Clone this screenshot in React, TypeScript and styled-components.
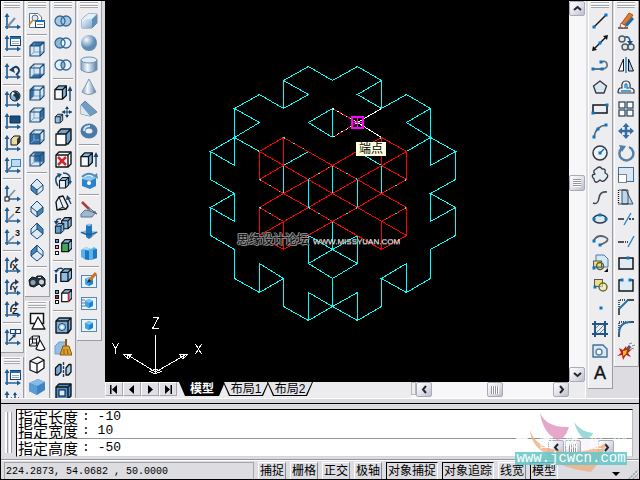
import React from "react";
import styled, { createGlobalStyle, css } from "styled-components";

const cjk = `"Liberation Sans", "Noto Sans CJK SC", sans-serif`;
const mono = `"Liberation Mono", "Noto Sans CJK SC", monospace`;

const GlobalStyle = createGlobalStyle`
  * { box-sizing: border-box; }
  html, body { margin: 0; height: 100%; }
  body { overflow: hidden; background: #dcdce1; color: #000; font: 12px/14px ${cjk}; }
  button { font: inherit; color: inherit; padding: 0; margin: 0; border: 0; background: none; }
`;

/* ---------- icons ---------- */

const N = "#16436f";
const B = "#3b76ad";
const L = "#c5dcf0";
const K = "#101418";

type Pt = string;
const Ln = ({ d, c = N, w = 1.4, dash }: { d: Pt; c?: string; w?: number; dash?: string }) => (
  <path d={d} fill="none" stroke={c} strokeWidth={w} strokeDasharray={dash} />
);
const Fl = ({ d, f, c = "none", w = 1 }: { d: Pt; f: string; c?: string; w?: number }) => (
  <path d={d} fill={f} stroke={c} strokeWidth={w} strokeLinejoin="round" />
);
const Dots = ({ at }: { at: number[][] }) => (
  <>{at.map(([x, y]) => <rect key={`${x}-${y}`} x={x - 1.5} y={y - 1.5} width="3" height="3" fill="#0876c4" />)}</>
);

const axes = (
  <>
    <Ln d="M4 17V3M2 15H16" c="#2a6496" w={1.7} />
    <Fl d="M4 1L6.5 5H1.5ZM18 15L14 12.500V17.500Z" f="#1d5a90" />
  </>
);
const dialog = (
  <>
    <rect x="7.500" y="2.500" width="10" height="9" fill="#fff" stroke={N} />
    <path d="M7 3H18V5H7Z" fill="#1f6cae" />
    <Ln d="M9 7.500H16M9 9.500H16" c="#9ab" w={1} />
  </>
);

const faces: Record<string, string> = {
  top: "M2 6L6 2H16L12 6Z",
  bottom: "M2 16L6 12H16L12 16Z",
  left: "M2 6L6 2V12L2 16Z",
  right: "M12 6L16 2V12L12 16Z",
  front: "M2 6H12V16H2Z",
  back: "M6 2H16V12H6Z",
};
const cubeView = (face: string) => (
  <>
    <Fl d="M2 6L6 2H16V12L12 16H2Z" f="#d6e6f4" />
    <Fl d={faces[face]} f="#326da6" />
    <Ln d="M6 2V12H16M6 12L2 16" c="#7fa6c9" w={1} />
    <Ln d="M2 6L6 2H16V12L12 16H2ZM2 6H12V16M12 6L16 2" c="#1d4a75" w={1.1} />
  </>
);
const isoView = (dark: string, from: "low" | "high") => (
  <>
    <Fl d="M9 1L15 7V12L9 17L3 12V7Z" f="#dce9f6" />
    <Fl d={dark} f="#4583bb" />
    <Ln
      d={from === "low" ? "M9 1L15 7V12L9 17L3 12V7ZM3 7L9 12L15 7M9 12V17" : "M9 1L15 7V12L9 17L3 12V7ZM9 1V7L3 12M9 7L15 12"}
      c="#1d4a75"
      w={1}
    />
  </>
);
const solid = (x = 0, y = 0, front = L, s = 1) => (
  <g transform={`translate(${x} ${y}) scale(${s})`}>
    <Fl d="M2 6L6 2H14V12L10 16H2Z" f="#86b6dd" />
    <Fl d="M2 6H10V16H2Z" f={front} />
    <Ln d="M2 6L6 2H14V12L10 16H2ZM2 6H10V16M10 6L14 2" c={K} w={1.4} />
  </g>
);
const rings = (a: string, mid: string, b: string) => (
  <>
    <circle cx="6" cy="9" r="5" fill={a} />
    <circle cx="12" cy="9" r="5" fill={b} />
    <Fl d="M9 5A5 5 0 0 1 9 13A5 5 0 0 1 9 5Z" f={mid} />
    <circle cx="6" cy="9" r="5" fill="none" stroke="#356b9b" strokeWidth="1.300" />
    <circle cx="12" cy="9" r="5" fill="none" stroke="#356b9b" strokeWidth="1.300" />
  </>
);
const curl = (
  <>
    <Ln d="M8 12Q7 5 13 4" c="#223c58" w={1.6} />
    <Fl d="M12 1L16 4L12 7Z" f="#223c58" />
  </>
);
const letter = (t: string, x: number, y: number, size = 9) => (
  <text x={x} y={y} fontFamily="Liberation Sans, sans-serif" fontWeight="700" fontSize={size} fill={K}>{t}</text>
);
const panelCube = (
  <>
    <rect x="1.500" y="3.500" width="15" height="12" fill="#eaf3fa" stroke="#5688b4" />
    <Fl d="M5 7L9 5L13 7V12L9 14L5 12Z" f="#1685d2" />
    <Fl d="M5 7L9 5L13 7L9 9Z" f="#83c6f2" />
    <Fl d="M5 7L9 9V14L5 12Z" f="#45a5e4" />
  </>
);

const icons: Record<string, React.ReactNode> = {
  ucs: <>{axes}<Ln d="M5 14L12 6" c="#7c91aa" w={2} /></>,
  ucsDialog: <>{axes}{dialog}</>,
  ucsPrev: <>{axes}<Ln d="M9 8Q12 3 15 6T13 13" c="#193f6a" w={2} /><Fl d="M6 8L10 5L12 11Z" f="#193f6a" /></>,
  ucsWorld: <>{axes}<circle cx="12" cy="6" r="5" fill="#8ab4d4" stroke={K} /><Fl d="M12 1Q8 4 11 6T12 11Q18 9 16 4Z" f="#14384f" /><Fl d="M9 2L12 3L9 6Z" f="#fff" /></>,
  ucsObject: <>{axes}<Fl d="M7 4H17V11H7Z" f="#1c4e7c" c="#0d3153" /></>,
  ucsFace: <>{axes}<Fl d="M8 5L11 2H17V8L14 11H8Z" f="#e7dca2" c={K} /><Fl d="M14 5L17 2V8L14 11Z" f="#39362b" /></>,
  ucsView: <>{axes}<rect x="8.500" y="3.500" width="9" height="7" fill="#b9dcf3" stroke="#3984bb" /><Ln d="M5 14L8 11" c={B} /></>,
  ucsOrigin: <>{axes}<Ln d="M5 14L12 6" c="#7c91aa" w={1.7} /><rect x="2" y="13" width="4" height="4" fill="#fff" stroke={K} /></>,
  ucsZ: <>{axes}<Ln d="M5 14L11 8" c="#7c91aa" w={1.7} />{letter("Z", 12, 7, 9)}</>,
  ucs3: <>{axes}<Ln d="M5 14L11 8" c="#7c91aa" w={1.7} />{letter("3", 12, 8)}</>,
  rotX: <>{axes}{curl}{letter("X", 9, 14, 9)}</>,
  rotY: <>{axes}{curl}{letter("Y", 9, 14, 9)}</>,
  rotZ: <>{axes}{curl}{letter("Z", 9, 14, 9)}</>,
  ucsApply: <>{axes}<rect x="7.500" y="1.500" width="10" height="4" fill="#fff" stroke={N} /><Ln d="M12.500 2V5M6 13L12 7" /><Fl d="M13 6L9 7L12 10Z" f={N} /></>,
  ucsMove: <>{axes}<Ln d="M12 4V14M7 9H17" c={N} /><Fl d="M12 2L14 5H10ZM18 9L15 7V11ZM6 9L9 7V11Z" f={N} /></>,

  namedView: <><path d="M1.500 1.500H10L13.500 5V15.500H1.500Z" fill="#fff" stroke="#50789c" /><circle cx="7" cy="6" r="3" fill="#d7e8f5" stroke="#6a6a68" /><Ln d="M5 8L1 13" c="#d38b28" w={2} /><rect x="7.500" y="8.500" width="9" height="7" fill="#fff" stroke={N} /><path d="M7 8H17V10H7Z" fill="#1f6cae" /><Ln d="M9 12.500H15" c="#88a" w={1} /></>,
  sw: isoView("M3 7L9 12V17L3 12Z", "low"),
  se: isoView("M15 7L9 12V17L15 12Z", "low"),
  ne: isoView("M9 1L15 7V12L9 7Z", "high"),
  nw: isoView("M9 1L3 7V12L9 7Z", "high"),
  camera: <><Fl d="M1 8L4 5L8 6L9 4L14 4L17 7V13L14 15L11 12L6 15L2 14Z" f="#28323c" c="#0c1218" /><circle cx="5" cy="10.500" r="2.500" fill="#8ca2b2" /><circle cx="13.500" cy="10" r="2.500" fill="#c6d3dc" /><Ln d="M10 5.500H13" c="#dde" w={1} /></>,
  wire2d: <><rect x="2.500" y="1.500" width="13" height="10" fill="#fff" stroke={K} strokeWidth="1.500" /><Fl d="M10 5L17 17H4Z" f="#fff" c={K} w={1.3} /></>,
  wire3d: <><Ln d="M1.500 5V12H8M1.500 5L4.500 2H11.500V8M1.500 5H8.500V12M8.500 5L11.500 2M4.500 2V9H10M4.500 9L1.500 12" c={K} w={1} /><Fl d="M12 6L17 15Q13 18 8 15Z" f="#fff" c={K} w={1.2} /></>,
  hidden: <Fl d="M2 5L10 1L16 4V12L9 17L2 14ZM2 5L9 8L16 4M9 8V17" f="#fff" c={K} w={1.3} />,
  shaded: <><Fl d="M1 5L10 1L17 4V12L9 17L1 13Z" f="#3f83c2" /><Fl d="M1 5L10 1L17 4L9 8Z" f="#89bae6" /><Fl d="M1 5L9 8V17L1 13Z" f="#5b9bd6" /></>,

  union: rings("#a9c8e0", "#a9c8e0", "#a9c8e0"),
  subtract: rings("#8eb6d6", "#f4f7fa", "#e8eef4"),
  intersect: rings("#eef2f6", "#8eb6d6", "#eef2f6"),
  extrudeFace: <><g>{solid(-1, 0, "#f4f7fa", 0.95)}</g><Ln d="M16 17V5" /><Fl d="M16 2L18.500 7H13.500Z" f={N} /></>,
  moveFace: <>{solid(0, 7, "#8ec0e6", 0.62)}<Ln d="M13 1V11M8 6H18" c={N} w={1} /><Fl d="M13 0L15 3H11ZM13 12L15 9H11ZM18 6L15 4V8ZM8 6L11 4V8Z" f={N} /></>,
  offsetFace: <><Fl d="M4 4L7 1H17V12L14 16H4Z" f="#6fa5d2" c={K} w={1.4} /><Fl d="M2 6H12V17H2Z" f="#fff" c={K} w={1.3} /><Ln d="M12 6L16 2" c={K} /></>,
  deleteFace: <><Fl d="M2 5L5 2H17V14L14 17H2Z" f="#fff" c={K} w={1.4} /><Ln d="M2 5H14V17M14 5L17 2" c={K} /><Ln d="M4 7L12 15M12 7L4 15" c="#d8232c" w={2.5} /></>,
  rotateFace: <>{solid(4, 4, "#eaf3fa", 0.75)}<Ln d="M4 14Q-1 6 5 3M9 1Q17 1 16 9" c="#1d5079" w={1.6} /><Fl d="M3 1L8 2L5 6ZM14 9H18L16 13Z" f="#1d5079" /></>,
  taperFace: <><Fl d="M2 8L5 3L9 2L14 12L12 15L3 16Z" f="#eaf3fa" c={K} w={1.4} /><Ln d="M5 3L9 13L12 15M9 13L3 16" c={K} w={1} /><Ln d="M17 10L14 4" /><Fl d="M13 1L17 5L12 6Z" f={N} /></>,
  copyFace: <>{solid(6, 0, "#8ebde3", 0.8)}{solid(0, 6, "#5c9dd1", 0.7)}<Ln d="M2 7Q2 2 7 3" /><Fl d="M0 5H5L2 9Z" f={N} /></>,
  colorFace: <>{solid(6, 0, "#43a854", 0.85)}<rect x="1.500" y="1.500" width="3" height="3" fill="#4aa1cf" stroke={K} /><rect x="1.500" y="7.500" width="3" height="3" fill="#e9a3a6" stroke={K} /><rect x="1.500" y="13.500" width="3" height="3" fill="#fff" stroke={K} /></>,
  copyEdge: <>{solid(5, 1, "#8ebde3", 0.9)}<Ln d="M2 17V8" w={2} /><Ln d="M2 5Q5 1 9 3" /><Fl d="M0 4L5 4L2 7Z" f={N} /></>,
  colorEdge: <>{solid(6, 0, "#fff", 0.85)}<Ln d="M14.500 5V14" c="#d8232c" /><rect x="1.500" y="2.500" width="3" height="3" fill="#4ab4cf" stroke={K} /><rect x="1.500" y="7.500" width="3" height="3" fill="#c1272d" stroke={K} /><rect x="1.500" y="12.500" width="3" height="3" fill="#fff" stroke={K} /></>,
  imprint: <><Fl d="M2 5L5 2H17V13L14 17H2Z" f="#7db0da" c={K} w={1.4} /><Ln d="M2 5H14V17M14 5L17 2" c={K} /><circle cx="8" cy="11" r="3.500" fill="#bad8ef" stroke={N} /><circle cx="8" cy="11" r="1.500" fill="#fff" /></>,
  clean: <><Fl d="M1 8L5 4H12V13L9 16H1Z" f="#8fc0e6" c="#7a9cba" /><Ln d="M12 1V8" c="#8b5a14" w={2} /><Fl d="M9 8H15L18 17H6Z" f="#e0a12d" c="#87580f" /><Ln d="M10 11V16M13 11L14 16" c="#87580f" w={1} /></>,
  separate: <><Fl d="M1.500 8L5 4.500H7V12L4 15H1.500Z" f="#78addb" c={K} w={1.3} /><Fl d="M12 8L15 4.500H17V12L14.500 15H12Z" f="#a8cbe8" c={K} w={1.3} /><Ln d="M9.500 2V17" c={N} dash="3 1" /></>,
  shell: <><Fl d="M2 5L5 2H17V14L14 17H2Z" f="#4b8fcc" c={K} w={1.4} /><Ln d="M2 5H14V17M14 5L17 2" c={K} /><rect x="5" y="8" width="6" height="6" fill="#d8eaf7" stroke={K} /></>,

  box: <><Fl d="M2 7L8 2H17V11L12 16H2Z" f="#5f8fb8" c="#6c8cab" /><Fl d="M2 7L8 2H17L12 7Z" f="#e3f0fb" /><Fl d="M2 7H12V16H2Z" f="url(#metal)" /></>,
  sphere: <circle cx="9" cy="9" r="8" fill="url(#ball)" />,
  cylinder: <><Fl d="M1 4V14Q9 19 17 14V4Z" f="url(#tube)" c="#7792ac" /><ellipse cx="9" cy="4" rx="8" ry="3" fill="#dcecf8" stroke="#7792ac" /></>,
  cone: <Fl d="M9 1L16 14Q9 19 2 14Z" f="url(#tube)" c="#8497ab" />,
  wedge: <><Fl d="M1 5L5 1L17 12L10 16L1 14Z" f="#6f9dc6" c="#6b8399" /><Fl d="M1 5L10 16L1 14Z" f="#dbe6ef" /></>,
  torus: <><ellipse cx="9" cy="9" rx="6" ry="5" fill="none" stroke="#4a7ba8" strokeWidth="5" /><path d="M4 9Q4 4 10 4" fill="none" stroke="#c9e2f5" strokeWidth="2" /></>,
  extrude: <>{solid(-1, 1, "#f4f7fa", 0.95)}<Ln d="M16 17V5" /><Fl d="M16 2L18.500 7H13.500Z" f={N} /></>,
  revolve: <><Fl d="M2 7L8 4L16 6V14L10 17L2 14Z" f="#2d83c9" /><Fl d="M2 7L8 4L16 6L10 9Z" f="#8ec8ef" /><circle cx="9" cy="11" r="2" fill="#fff" /><Ln d="M2 5Q8 -1 15 4" c="#4e8dbd" w={2} /><Fl d="M13 4L17 1L18 7Z" f="#4e8dbd" /></>,
  slice: <><Fl d="M1 14L5 10L16 12L12 17H1Z" f="#9cb9d1" c="#577796" /><Ln d="M2 2L9 9" c="#b13a35" w={2.5} /><Fl d="M8 7L17 14L10 11Z" f="#d8dce0" c="#5a5f66" /></>,
  section: <><Fl d="M0 11L6 8L18 10L12 15Z" f="#86b4da" /><Fl d="M6 3L12 2V15L9 17L6 15Z" f="#2276b7" /><Fl d="M6 3Q9 0 12 3Q9 5 6 3Z" f="#8cc6ee" /><Ln d="M1 10Q9 15 17 10" c="#155b98" /></>,
  interfere: <><Fl d="M1 6L6 3L11 5L14 3L17 5V14L12 16L6 16L1 13Z" f="#5eb0e9" /><Fl d="M5 6L9 7V16L5 15ZM13 6L17 5V14L13 15Z" f="#1a79c0" /><Fl d="M6 3L11 5L7 6L2 5Z" f="#b0dcf7" /></>,
  sketch: <>{panelCube}<Ln d="M16 1L9 9" c="#ce7322" w={3} /><Fl d="M9 7L7 11L11 9Z" f="#222" /></>,
  viewPanel: <>{panelCube}<Ln d="M2 6H5M2 9H5M2 12H5" c="#5d7891" w={1} /></>,
  profile: panelCube,

  line: <><Ln d="M3 15L15 3" c={K} w={1.5} /><Dots at={[[3, 15], [15, 3]]} /></>,
  xline: <><Ln d="M3 15L15 3" c={K} w={1.5} /><Fl d="M17 1L16 6L12 2ZM1 17L2 12L6 16Z" f={K} /><Dots at={[[9, 9]]} /></>,
  pline: <><Ln d="M3 13H12Q17 12 16 8T10 6" c="#68727c" w={1.8} /><Dots at={[[2, 13], [11, 13], [10, 6]]} /></>,
  polygon: <Fl d="M9 3L15.500 8L13 15H5L2.500 8Z" f="#d9e7f2" c="#333c44" w={1.4} />,
  rect: <><rect x="2" y="5" width="14" height="8" fill="#e8f0f6" stroke={K} strokeWidth="1.500" /><Dots at={[[2, 13], [16, 5]]} /></>,
  arc: <><Ln d="M3 16Q4 4 16 3" c="#59636d" w={1.5} /><Dots at={[[3, 15], [7, 7], [15, 3]]} /></>,
  circle: <><circle cx="9" cy="9" r="7" fill="#edf3f8" stroke="#303840" strokeWidth="1.500" /><Ln d="M9 9L13 5" c="#0876c4" /><Dots at={[[9, 9]]} /></>,
  cloud: <Fl d="M5 3Q9 -1 11 3Q15 2 14 7Q19 9 15 13Q12 17 9 14Q4 19 3 13Q-1 9 4 8Q1 5 5 3Z" f="#e5edf3" c="#333b43" w={1.3} />,
  spline: <Ln d="M2 15Q7 17 8 10T16 4" c="#444c54" w={1.6} />,
  ellipse: <><ellipse cx="9" cy="9" rx="6.500" ry="4" fill="#dce8f1" stroke="#303840" strokeWidth="1.500" /><Dots at={[[3, 9], [15, 9], [9, 5]]} /></>,
  ellipseArc: <><Ln d="M3 8Q7 2 14 5T9 13" c="#5b646c" w={1.8} /><Dots at={[[3, 9], [9, 13]]} /></>,
  insert: <><Fl d="M5 1H13L17 5V13H5Z" f="#d6e8f5" c="#477ca8" /><rect x="2.500" y="7" width="8" height="6" fill="#f1dd83" stroke="#556" /><circle cx="9" cy="12" r="3.500" fill="none" stroke="#56632a" strokeWidth="1.500" /><Dots at={[[3, 14]]} /><Fl d="M17 14V18H13Z" f={K} /></>,
  block: <><rect x="3.500" y="3.500" width="8" height="7" fill="#f1dd83" stroke="#556" /><circle cx="12" cy="11" r="4" fill="#efe9aa" fillOpacity=".6" stroke="#666f2d" strokeWidth="1.500" /><Dots at={[[4, 11]]} /></>,
  point: <Dots at={[[10, 10]]} />,
  hatch: <><Ln d="M4 1V17M14 1V17M1 4H17M1 14H17" c="#255580" w={2} /><Ln d="M5 8L8 5M5 13L13 5M9 13L13 9" c="#5f89ad" w={1} /></>,
  region: <><Fl d="M2 3H12L16 7V15H2Z" f="#d8e8f4" c="#456f95" w={1.4} /><circle cx="8" cy="10" r="3" fill="#fff" stroke="#5a84a8" strokeWidth="1.500" /></>,
  text: <text x="3" y="15" fontFamily="Liberation Sans, sans-serif" fontSize="18" fill={K} stroke={K} strokeWidth=".4">A</text>,

  erase: <><Ln d="M1 16H11" c="#353535" /><Fl d="M12 1L16 3L9 13L4 12Z" f="#dd7b2d" c="#aa5522" /><Fl d="M15 5L17 7L10 15L8 12Z" f="#236cae" /><Fl d="M4 11L9 14L7 16L3 15Z" f="#fff" c="#b34c39" /></>,
  copy: <><circle cx="5" cy="5" r="3" fill="#dfe8ef" stroke="#505a63" strokeWidth="1.400" /><circle cx="8" cy="13" r="3" fill="#dfe8ef" stroke="#505a63" strokeWidth="1.400" /><circle cx="14" cy="13" r="3" fill="#dfe8ef" stroke="#505a63" strokeWidth="1.400" /><Ln d="M8 3Q13 2 13 8" c="#245f97" w={1.7} /><Fl d="M10 7H16L13 11Z" f="#174f83" /></>,
  mirror: <><Fl d="M6.500 3V15H1.500Z" f="#fff" c={K} /><Fl d="M11.500 3V15H16.500Z" f="#b9cde0" c={K} /><Ln d="M9 1V17" c="#2484cb" w={1.5} /></>,
  offset: <><Ln d="M1 15H17V12Q16 10 13 10Q14 3 9 3Q4 3 5 10H3Q1 11 1 15" c="#303a43" w={1.2} /><Ln d="M4 13H14M8 10V7Q9 5 10 7V10H12" c="#2484cb" w={1.4} /></>,
  array: <>{[[2, 2], [10, 2], [2, 10], [10, 10]].map(([x, y]) => <rect key={`${x}-${y}`} x={x} y={y} width="6" height="6" fill="#fff" stroke="#223c55" strokeWidth="1.200" />)}</>,
  move: <><Ln d="M9 4V14M4 9H14" c="#336da3" w={2.5} /><Fl d="M9 1L12.500 5H5.500ZM9 17L12.500 13H5.500ZM1 9L5 5.500V12.500ZM17 9L13 5.500V12.500Z" f="#336da3" /></>,
  rotate: <><Ln d="M5 4A7 7 0 1 0 12 3" c="#4f7faa" w={2.4} /><Fl d="M2 1L9 2L5 8Z" f="#4f7faa" /></>,
  scale: <><rect x="1.500" y="1.500" width="15" height="14" fill="#dbe8f3" stroke="#416e97" /><rect x="1.500" y="8.500" width="8" height="8" fill="#fff" stroke={K} strokeDasharray="1 1" /></>,
  stretch: <><Fl d="M5 2H9L16 16H5Z" f="#c1d6e9" c="#2e577d" /><Ln d="M1.500 2V16H11V2H2" c={K} dash="1 1" w={1.3} /></>,
  trim: <><Ln d="M1 9H7" c={K} /><Ln d="M12 9H18" c={K} dash="2 1" /><Ln d="M7 15L14 3" c="#2983cb" /></>,
  extend: <><Ln d="M1 10H7" c={K} /><Ln d="M8 10H12" c={K} dash="1 1" /><Ln d="M11 15L17 4" c="#2983cb" /></>,
  breakPoint: <><rect x="2" y="4" width="14" height="11" fill="#dfebf5" stroke={K} strokeWidth="1.500" /><Dots at={[[11, 4]]} /></>,
  breakLine: <><Fl d="M2 4H16V15H2Z" f="#dfebf5" /><Ln d="M5 4H2V15H16V4H13" c={K} /><Dots at={[[5, 4], [13, 4]]} /></>,
  chamfer: <><Ln d="M2 17V10M10 2H17" c={K} /><Ln d="M2 9V2H9" c={K} dash="1 1" /><Ln d="M2 11L11 2" c="#236fab" w={1.8} /></>,
  fillet: <><Ln d="M2 17V12M12 2H17" c={K} /><Ln d="M2 10V2H10" c={K} dash="1 1" /><Ln d="M2 14Q2 2 14 2" c="#236fab" w={2} /></>,
  explode: <><Fl d="M2 6L6 8L9 4L10 8L15 7L11 11L14 15L9 13L6 18L5 13L0 14L4 11Z" f="#c61c15" /><Fl d="M6 9L10 8L9 12L6 14Z" f="#f1cc20" /><Ln d="M10 8L13 4" c="#555" w={3} /><Ln d="M12 2L15 1M15 4L18 3M14 6L17 7" c="#888" w={1} /></>,
};
["top", "bottom", "left", "right", "front", "back"].forEach((f) => { icons[f] = cubeView(f); });

const IconSvg = styled.svg`
  display: block;
  width: 18px;
  height: 18px;
`;

const Defs = styled.svg`
  position: absolute;
  width: 0;
  height: 0;
`;

/* ---------- toolbars ---------- */

const Frame = styled.div`
  display: flex;
  flex-direction: column;
  height: 100vh;
  overflow: hidden;
  border: 1px solid #000;
`;
const Workspace = styled.main`
  display: flex;
  flex: 1;
  min-height: 0;
  overflow: hidden;
`;
const Dock = styled.div<{ $side: "left" | "right" }>`
  display: flex;
  gap: 1px;
  overflow: hidden;
  ${(p) => (p.$side === "left" ? "padding-right: 3px;" : "padding-left: 2px;")}
`;
const DockColumn = styled.div<{ $narrow?: boolean }>`
  display: flex;
  flex-direction: column;
  gap: 4px;
  width: ${(p) => (p.$narrow ? 23 : 25)}px;
`;
const Bar = styled.div`
  flex: none;
  display: flex;
  flex-direction: column;
  align-items: center;
  padding-bottom: 4px;
  background: #ededf0;
  border-right: 1px solid #9c9ca4;
  border-bottom: 1px solid #9c9ca4;
  box-shadow: inset 1px 1px #fff;
`;
const Grip = styled.div`
  align-self: stretch;
  height: 6px;
  margin: 1px 3px 2px;
  border: solid #a6a6ad;
  border-width: 1px 0;
  background: linear-gradient(#fff 0 1px, #ededf0 1px 2px, #a6a6ad 2px 3px, #fff 3px);
`;
const Separator = styled.div`
  align-self: stretch;
  height: 2px;
  margin: 2px;
  border-top: 1px solid #9c9ca4;
  border-bottom: 1px solid #fff;
`;
const Tool = styled.button`
  display: grid;
  place-items: center;
  width: 22px;
  height: 22px;
`;

const Toolbar = ({ label, items }: { label: string; items: string }) => (
  <Bar role="toolbar" aria-label={label}>
    <Grip />
    {items.split(" ").map((name, i) =>
      name === "|" ? (
        <Separator key={i} />
      ) : (
        <Tool key={i} type="button" aria-label={name}>
          <IconSvg viewBox="0 0 18 18" aria-hidden="true">{icons[name]}</IconSvg>
        </Tool>
      )
    )}
  </Bar>
);

/* ---------- drawing area ---------- */

const View = styled.section`
  flex: 1;
  min-width: 0;
  display: grid;
  grid-template: minmax(0, 1fr) 16px / minmax(0, 1fr) 17px;
`;
const Canvas = styled.div`
  display: grid;
  place-content: center;
  overflow: hidden;
  background: #000;
`;
const Scene = styled.div`
  position: relative;
  width: 464px;
  height: 382px;
`;
const Drawing = styled.svg`
  display: block;
  width: 100%;
  height: 100%;
`;
const SnapTip = styled.div`
  position: absolute;
  left: 251px;
  top: 141px;
  padding: 0 3px;
  background: #ffffe1;
  font-size: 12px;
  line-height: 14px;
`;
const SiteMark = styled.div`
  position: absolute;
  left: 132px;
  top: 231px;
  display: flex;
  align-items: center;
  gap: 4px;
  color: #000;
  font-weight: 400;
  font-size: 12px;
  line-height: 14px;
  white-space: nowrap;
  text-shadow: 1px 0 #8c8c8c, -1px 0 #8c8c8c, 0 1px #8c8c8c, 0 -1px #8c8c8c, 1px 1px #8c8c8c, -1px -1px #8c8c8c;
`;
const SiteUrl = styled.span`
  padding-top: 3px;
  font-size: 8px;
  color: #eee;
  text-shadow: 0 1px #777;
`;

const gx = (i: number) => Math.round(227 + 24.5 * i);
const gy = (j: number) => Math.round(66 + 14.1 * j);
const trace = (runs: string) =>
  runs.split(";").map((run) =>
    run.trim().split(" ").map((p, k) => {
      const [i, j] = p.split(",").map(Number);
      return `${k ? "L" : "M"}${gx(i) + 0.5} ${gy(j) - 0.5}`;
    }).join("")
  ).join("");
const mirrored = (runs: string) =>
  runs + ";" + runs.split(";").map((r) => r.trim().split(" ").map((p) => {
    const [i, j] = p.split(",").map(Number);
    return `${-i},${j}`;
  }).join(" ")).join(";");

const outline = trace(mirrored(
  "0,1 -1,0 -2,1 -2,3 -1,2 -2,1;-2,3 -3,2 -4,3 -3,4 -4,5;-4,3 -4,7 -5,6 -4,5 -3,6;" +
  "-5,6 -5,8 -4,9 -5,10 -4,11 -4,9;-5,10 -5,12 -4,13 -4,15 -3,16 -2,15 -3,14 -3,16;" +
  "-2,15 -2,17 -1,18 0,17 -1,16 -1,18;0,17 0,15 -1,14 0,13 -1,12 -1,14;0,13 0,11;" +
  "-1,6 -2,7 -2,9;-1,8 -1,10;0,7 0,9"
) + ";0,5 0,3 -1,4 0,5");
const selected = trace(mirrored(
  "0,7 -2,5 -3,6 -3,8 -2,9 -1,8 0,7;-2,5 -2,7;-3,6 0,9 -1,10 -2,9;-3,8 -2,7;" +
  "-2,9 -3,10 -3,12 -2,13 0,11 -1,10 -3,12;-3,10 -2,11 -2,13"
));
const flecks = trace(mirrored("-1,8 0,7;-1,10 0,11;-2,5 -1,6;-3,8 -2,9;-3,10 -2,11"));

const Model = () => (
  <Drawing viewBox="0 0 464 382" role="img" aria-label="三维模型">
    <g fill="none" shapeRendering="crispEdges">
      <path d={outline} stroke="#0ff" />
      <path d={selected} stroke="#f00" />
      <path d={flecks} stroke="#0ff" strokeDasharray="2 9" />
      <path d={trace("2,3 1,4 2,5")} stroke="#fff" />
      <path d={trace("0,3 1,4 0,5")} stroke="#f00" />
      <path d={trace("0,3 1,4 0,5")} stroke="#fff" strokeDasharray="2 3" />
      <path d="M247 116H258V127H247Z" stroke="#f0f" strokeWidth="2" />
      <path d="M247 121.500H258M252.500 116V127" stroke="#f0f" />
    </g>
    <g fill="none" stroke="#fff" shapeRendering="crispEdges">
      <path d="M50.500 334V371L22 353.500M50.500 371L81 353.500" />
      <path d="M45 370.500L50 368L56 370.500L50 373Z" />
      <path d="M18 353L27 353L23 358ZM83 353L74 353L78 358ZM22 353L23 357M78 353V357" />
      <path d="M47.500 316.500H53.500L47.500 327.500H53.500" />
      <path d="M7.500 342L10.500 347.500L13.500 342M10.500 347.500V353" />
      <path d="M90.500 343L96.500 353M96.500 343L90.500 353" />
    </g>
  </Drawing>
);

/* ---------- scroll bars ---------- */

const raised = css`
  border: 1px solid #a9abb8;
  border-radius: 2px;
  background: linear-gradient(135deg, #fff, #dcdce6 60%, #bcbccb);
`;
const ScrollBar = styled.div<{ $vertical?: boolean }>`
  display: flex;
  flex-direction: ${(p) => (p.$vertical ? "column" : "row")};
  background: #f7f7f9;
  min-width: 0;
  min-height: 0;
`;
const ScrollButton = styled.button`
  ${raised}
  flex: none;
  display: grid;
  place-items: center;
  width: 16px;
  height: 15px;
`;
const Thumb = styled.div<{ $vertical?: boolean }>`
  ${raised}
  flex: none;
  display: grid;
  place-items: center;
  width: 16px;
  height: ${(p) => (p.$vertical ? 16 : 15)}px;
  &::after {
    content: "";
    width: 8px;
    height: 8px;
    background: repeating-linear-gradient(${(p) => (p.$vertical ? "180deg" : "90deg")}, #9294a2 0 1px, #fff 1px 2px);
  }
`;
const Room = styled.div<{ $grow: number }>`
  flex: ${(p) => p.$grow} 1 0;
`;
const Chevron = ({ dir }: { dir: "up" | "down" | "left" | "right" }) => {
  const d = { up: "M1 6L4.500 3L8 6", down: "M1 3L4.500 6L8 3", left: "M6 1L3 4.500L6 8", right: "M3 1L6 4.500L3 8" }[dir];
  return <svg width="9" height="9" viewBox="0 0 9 9" aria-hidden="true"><path d={d} fill="none" stroke="#252530" strokeWidth="2" /></svg>;
};
const Scroller = ({ vertical, before, after }: { vertical?: boolean; before: number; after: number }) => (
  <>
    <ScrollButton type="button" aria-label={vertical ? "up" : "left"}><Chevron dir={vertical ? "up" : "left"} /></ScrollButton>
    <Room $grow={before} />
    <Thumb $vertical={vertical} />
    <Room $grow={after} />
    <ScrollButton type="button" aria-label={vertical ? "down" : "right"}><Chevron dir={vertical ? "down" : "right"} /></ScrollButton>
  </>
);

/* ---------- layout tabs ---------- */

const TabStrip = styled.div`
  display: flex;
  align-items: flex-start;
  min-width: 0;
  background: #ececef;
`;
const NavButton = styled.button`
  display: grid;
  place-items: center;
  width: 18px;
  height: 14px;
  background: #dfdfe5;
  border: 1px solid #fff;
  border-right-color: #a6a6ad;
  border-bottom-color: #a6a6ad;
`;
const Tabs = styled.div`
  display: flex;
  padding-left: 2px;
`;
const Tab = styled.button<{ $active?: boolean }>`
  position: relative;
  isolation: isolate;
  width: 46px;
  height: 14px;
  margin-right: -2px;
  clip-path: polygon(0 0, 100% 0, calc(100% - 6px) 100%, 6px 100%);
  background: #000;
  color: ${(p) => (p.$active ? "#fff" : "#000")};
  font-weight: ${(p) => (p.$active ? 700 : 400)};
  font-size: 12px;
  line-height: 13px;
  white-space: nowrap;
  &::before {
    content: "";
    position: absolute;
    z-index: -1;
    inset: 0 1px 1px;
    clip-path: polygon(0 0, 100% 0, calc(100% - 6px) 100%, 6px 100%);
    background: ${(p) => (p.$active ? "#000" : "#e3e3e9")};
  }
`;
const TabSpace = styled.div`
  flex: 1;
`;
const TabScroll = styled(ScrollBar)`
  flex: 0 0 34%;
  align-self: stretch;
`;
const SplitGrip = styled.div`
  width: 5px;
  height: 13px;
  border: 1px solid #b7b7bd;
  background: #eee;
`;
const Corner = styled.div`
  background: #ececef;
  border-right: 1px solid #fff;
`;
const Nav = ({ d, name }: { d: string; name: string }) => (
  <NavButton type="button" aria-label={name}>
    <svg width="10" height="9" viewBox="0 0 10 9" aria-hidden="true"><path d={d} /></svg>
  </NavButton>
);

/* ---------- command window and status ---------- */

const Sash = styled.div`
  flex: none;
  height: 5px;
  background: #d9d9df;
  border-top: 1px solid #fff;
`;
const CommandDock = styled.section`
  flex: none;
  position: relative;
  display: flex;
  gap: 3px;
  padding: 5px 6px 2px 4px;
  border-top: 1px solid #000;
`;
const CommandGrip = styled.div`
  width: 8px;
  margin: 3px 0 4px;
  background: linear-gradient(90deg, #fff 0 2px, #9b9ba2 2px 3px, #dcdce1 3px 4px, #fff 4px 6px, #9b9ba2 6px 7px, #dcdce1 7px);
`;
const CommandBox = styled.div`
  flex: 1;
  min-width: 0;
  background: #fff;
  border-top: 1px solid #000;
  border-left: 1px solid #000;
  border-right: 1px solid #b8b8be;
  border-bottom: 1px solid #d5d5da;
  font-family: ${mono};
  font-size: 13px;
`;
const History = styled.div`
  height: 29px;
  border-bottom: 1px solid #92959a;
  padding-left: 1px;
`;
const PromptLine = styled.div`
  display: flex;
  align-items: center;
  gap: 4px;
  height: 14px;
  line-height: 14px;
  white-space: pre;
`;
const Han = styled.span`
  font-family: "Noto Sans CJK SC", sans-serif;
  font-size: 15px;
`;
const Entry = styled.div`
  display: flex;
  align-items: center;
  height: 17px;
  padding: 0 18px 0 1px;
`;
const EntryLabel = styled.label`
  display: flex;
  align-items: center;
  gap: 4px;
  line-height: 16px;
  white-space: pre;
`;
const EntryInput = styled.input`
  flex: 1;
  min-width: 0;
  height: 16px;
  padding: 0;
  border: 0;
  outline: 0;
  background: transparent;
  font: 13px/16px ${mono};
`;
const EntryScroll = styled(ScrollBar)`
  width: 66px;
`;

const StatusBar = styled.footer`
  flex: none;
  display: flex;
  align-items: stretch;
  gap: 4px;
  height: 20px;
  padding: 2px 1px 0 3px;
  border-top: 1px solid #95959c;
  box-shadow: inset 0 1px #fff;
`;
const Coordinates = styled.output`
  width: 250px;
  padding-left: 1px;
  border: 1px solid #a6a6ad;
  border-bottom: 0;
  font: 10px/17px ${mono};
  white-space: pre;
`;
const Toggle = styled.button<{ $on?: boolean }>`
  padding: 0 1px;
  font-size: 12px;
  line-height: 16px;
  white-space: nowrap;
  border: solid ${(p) => (p.$on ? "#000" : "#fff")};
  border-width: 1px 1px 0 1px;
  border-right-color: ${(p) => (p.$on ? "#fff" : "#85858c")};
`;
const Tray = styled.div`
  flex: 1;
  display: flex;
  justify-content: flex-end;
  align-items: flex-end;
  gap: 8px;
`;

const Brand = styled.div`
  position: absolute;
  right: 12px;
  top: 9px;
  width: 112px;
  height: 62px;
  pointer-events: none;
`;
const BrandArt = styled.svg`
  position: absolute;
  inset: 0;
`;
const BrandText = styled.div`
  position: absolute;
  inset: 22px 0 auto;
  display: flex;
  flex-direction: column;
  gap: 3px;
`;
const BrandName = styled.div`
  display: flex;
  justify-content: space-between;
  color: rgba(255, 255, 255, 0.85);
  font-size: 14px;
  line-height: 14px;
`;
const BrandUrl = styled.div`
  height: 13px;
  background: rgba(104, 199, 201, 0.88);
  color: #fff;
  text-align: center;
  font: 14px/12px ${mono};
`;

const toggles: [string, boolean][] = [
  ["捕捉", false], ["栅格", false], ["正交", false], ["极轴", false],
  ["对象捕捉", true], ["对象追踪", true], ["线宽", false], ["模型", true],
];

export default function App() {
  return (
    <>
      <GlobalStyle />
      <Defs aria-hidden="true">
        <defs>
          <radialGradient id="ball" cx=".35" cy=".3"><stop stopColor="#f4faff" /><stop offset="1" stopColor="#5e8bb5" /></radialGradient>
          <linearGradient id="tube"><stop stopColor="#7e9fbd" /><stop offset=".4" stopColor="#f5faff" /><stop offset="1" stopColor="#557da3" /></linearGradient>
          <linearGradient id="metal" x2="1" y2="1"><stop stopColor="#f0f6fc" /><stop offset="1" stopColor="#7ba6cd" /></linearGradient>
        </defs>
      </Defs>
      <Frame>
        <Workspace>
          <Dock $side="left">
            <DockColumn $narrow>
              <Toolbar label="UCS" items="ucs ucsDialog | ucsPrev | ucsWorld ucsObject ucsFace ucsView | ucsOrigin ucsZ ucs3 | rotX rotY rotZ | ucsApply" />
              <Toolbar label="UCS II" items="ucsDialog ucsMove" />
            </DockColumn>
            <DockColumn>
              <Toolbar label="视图" items="namedView | top bottom left right front back | sw se ne nw | camera" />
              <Toolbar label="视觉样式" items="wire2d wire3d hidden shaded" />
            </DockColumn>
            <DockColumn>
              <Toolbar label="实体编辑" items="union subtract intersect | extrudeFace moveFace offsetFace deleteFace rotateFace taperFace copyFace colorFace | copyEdge colorEdge | imprint clean separate shell" />
            </DockColumn>
            <DockColumn>
              <Toolbar label="实体" items="box sphere cylinder cone wedge torus | extrude revolve | slice section interfere | sketch viewPanel profile" />
            </DockColumn>
          </Dock>

          <View>
            <Canvas>
              <Scene>
                <Model />
                <SiteMark>思缘设计论坛<SiteUrl>WWW.MISSYUAN.COM</SiteUrl></SiteMark>
                <SnapTip role="tooltip">端点</SnapTip>
              </Scene>
            </Canvas>
            <ScrollBar $vertical><Scroller vertical before={158} after={175} /></ScrollBar>
            <TabStrip>
              <Nav name="first" d="M1 0H2.500V9H1ZM8 0V9L3 4.500Z" />
              <Nav name="previous" d="M7 0V9L2 4.500Z" />
              <Nav name="next" d="M3 0V9L8 4.500Z" />
              <Nav name="last" d="M7.500 0H9V9H7.500ZM2 0V9L7 4.500Z" />
              <Tabs role="tablist">
                <Tab type="button" role="tab" aria-selected="true" $active>模型</Tab>
                <Tab type="button" role="tab" aria-selected="false">布局1</Tab>
                <Tab type="button" role="tab" aria-selected="false">布局2</Tab>
              </Tabs>
              <TabSpace />
              <TabScroll><SplitGrip /><Scroller before={54} after={49} /></TabScroll>
            </TabStrip>
            <Corner />
          </View>

          <Dock $side="right">
            <DockColumn>
              <Toolbar label="绘图" items="line xline pline polygon rect arc circle cloud spline ellipse ellipseArc insert block point hatch region text" />
            </DockColumn>
            <DockColumn>
              <Toolbar label="修改" items="erase copy mirror offset array move rotate scale stretch trim extend breakPoint breakLine chamfer fillet explode" />
            </DockColumn>
          </Dock>
        </Workspace>

        <Sash />
        <CommandDock>
          <CommandGrip />
          <CommandBox>
            <History>
              <PromptLine><Han>指定长度</Han>: -10</PromptLine>
              <PromptLine><Han>指定宽度</Han>: 10</PromptLine>
            </History>
            <Entry>
              <EntryLabel htmlFor="prompt"><Han>指定高度</Han>{": "}</EntryLabel>
              <EntryInput id="prompt" defaultValue="-50" />
              <EntryScroll><Scroller before={1} after={14} /></EntryScroll>
            </Entry>
          </CommandBox>
          <Brand>
            <BrandArt viewBox="0 0 112 62" width="112" height="62" aria-hidden="true">
              <path d="M25 0Q32 15 54 14Q50 27 42 27Q28 20 25 0Z" fill="#df91bd" fillOpacity=".8" />
              <path d="M59 9Q66 19 78 20Q76 26 69 26Q62 20 59 9Z" fill="#85cfce" fillOpacity=".8" />
              <path d="M15 17Q20 34 45 38Q70 42 91 30Q86 49 76 59Q42 55 30 40Q16 32 15 17Z" fill="#edae80" fillOpacity=".8" />
            </BrandArt>
            <BrandText>
              <BrandName>{[..."中国教程网"].map((c) => <span key={c}>{c}</span>)}</BrandName>
              <BrandUrl>www.jcwcn.com</BrandUrl>
            </BrandText>
          </Brand>
        </CommandDock>

        <StatusBar>
          <Coordinates>224.2873, 54.0682 , 50.0000</Coordinates>
          {toggles.map(([name, on]) => (
            <Toggle key={name} type="button" aria-pressed={on} $on={on}>{name}</Toggle>
          ))}
          <Tray>
            <svg width="8" height="8" viewBox="0 0 8 8" aria-hidden="true"><path d="M0 1H8L4 5Z" /></svg>
            <svg width="10" height="10" viewBox="0 0 10 10" aria-hidden="true"><path d="M1 10L10 1M5 10L10 5M9 10L10 9" stroke="#9c9ca4" strokeWidth="1.500" strokeDasharray="2 1" /></svg>
          </Tray>
        </StatusBar>
      </Frame>
    </>
  );
}
